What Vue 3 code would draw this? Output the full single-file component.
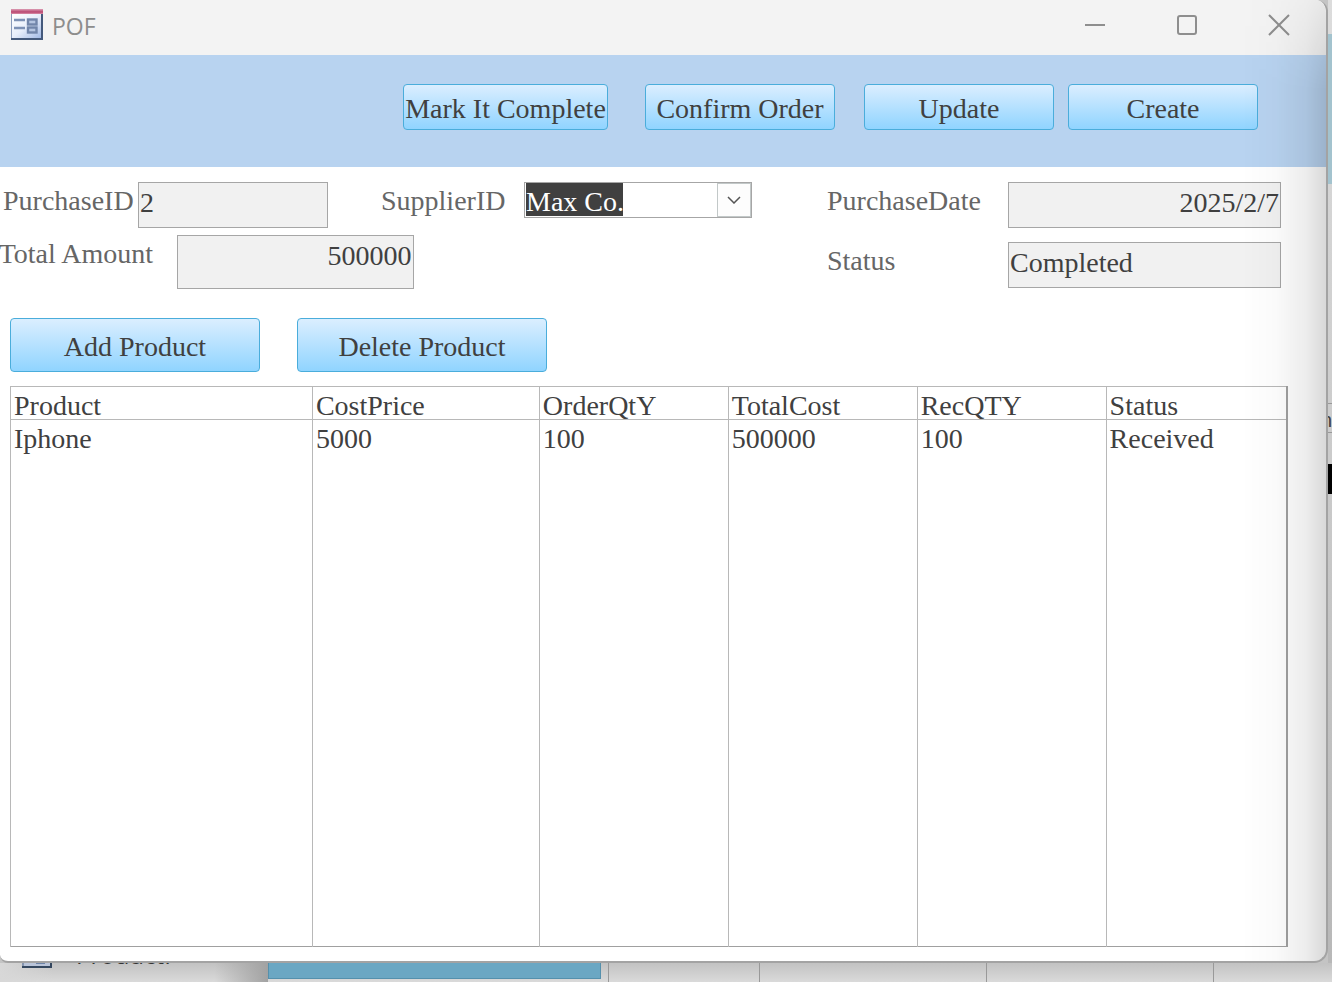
<script setup>
import { ref } from 'vue'

const supplier = ref('Max Co.')
const actions = [
  { label: 'Mark It Complete', kind: 'mark' },
  { label: 'Confirm Order', kind: 'confirm' },
  { label: 'Update', kind: 'update' },
  { label: 'Create', kind: 'create' },
]
const columns = ['Product', 'CostPrice', 'OrderQtY', 'TotalCost', 'RecQTY', 'Status']
const rows = [['Iphone', '5000', '100', '500000', '100', 'Received']]
</script>

<template>
  <div class="desktop">
    <div class="window">
      <header class="titlebar">
        <svg class="form-icon" width="32" height="32" viewBox="0 0 32 32" aria-hidden="true">
          <defs>
            <linearGradient id="iconBody" x1="0" y1="0" x2="1" y2="1">
              <stop offset="0" stop-color="#ffffff" />
              <stop offset="0.5" stop-color="#e8eefb" />
              <stop offset="1" stop-color="#9fb7e4" />
            </linearGradient>
            <linearGradient id="iconBar" x1="0" y1="0" x2="0" y2="1">
              <stop offset="0" stop-color="#dc9db4" />
              <stop offset="0.6" stop-color="#b8456f" />
              <stop offset="1" stop-color="#d990a9" />
            </linearGradient>
          </defs>
          <rect x="0" y="0" width="32" height="31" fill="#8a9bbb" />
          <rect x="1" y="5" width="30" height="24" fill="url(#iconBody)" />
          <path d="M0 30h32M31 5v26" stroke="#44597c" stroke-width="2" />
          <rect x="0" y="0" width="32" height="5" fill="url(#iconBar)" />
          <path d="M3 11h11M3 19h11" stroke="#7d91b5" stroke-width="2.4" />
          <rect x="17" y="10.5" width="8.500" height="5" fill="#b4c4e0" stroke="#7185aa" stroke-width="2.4" />
          <rect x="17" y="18.500" width="8.500" height="5" fill="#b4c4e0" stroke="#7185aa" stroke-width="2.4" />
        </svg>
        <h1>POF</h1>
        <div class="controls">
          <button type="button" aria-label="Minimize">
            <svg width="22" height="22" viewBox="0 0 22 22"><path d="M1 11h20" /></svg>
          </button>
          <button type="button" aria-label="Maximize">
            <svg width="22" height="22" viewBox="0 0 22 22"><rect x="2" y="2" width="18" height="18" rx="2" /></svg>
          </button>
          <button type="button" aria-label="Close">
            <svg width="22" height="22" viewBox="0 0 22 22"><path d="M1 1l20 20M21 1L1 21" /></svg>
          </button>
        </div>
      </header>

      <nav class="band">
        <button v-for="a in actions" :key="a.kind" type="button" class="cmd" :class="a.kind">{{ a.label }}</button>
      </nav>

      <main>
        <section class="fields">
          <div class="left">
            <div class="line">
              <div class="field purchase">
                <label for="purchase-id">PurchaseID</label>
                <input id="purchase-id" type="text" value="2" readonly />
              </div>
              <div class="field supplier">
                <label for="supplier-id">SupplierID</label>
                <div class="combo">
                  <select id="supplier-id" v-model="supplier">
                    <option>Max Co.</option>
                  </select>
                  <span class="arrow">
                    <svg width="14" height="8" viewBox="0 0 14 8"><path d="M1 1l6 6 6-6" /></svg>
                  </span>
                </div>
              </div>
            </div>
            <div class="field total">
              <label for="total">Total Amount</label>
              <input id="total" class="num" type="text" value="500000" readonly />
            </div>
          </div>
          <div class="right">
            <div class="field">
              <label for="date">PurchaseDate</label>
              <input id="date" class="num" type="text" value="2025/2/7" readonly />
            </div>
            <div class="field">
              <label for="status">Status</label>
              <input id="status" type="text" value="Completed" readonly />
            </div>
          </div>
        </section>

        <div class="row-actions">
          <button type="button" class="cmd">Add Product</button>
          <button type="button" class="cmd">Delete Product</button>
        </div>

        <table>
          <colgroup>
            <col v-for="(c, i) in columns" :key="c" :class="'col' + i" />
          </colgroup>
          <thead>
            <tr><th v-for="c in columns" :key="c" scope="col">{{ c }}</th></tr>
          </thead>
          <tbody>
            <tr v-for="(r, i) in rows" :key="i"><td v-for="(v, j) in r" :key="j">{{ v }}</td></tr>
            <tr class="filler"><td v-for="c in columns" :key="c"></td></tr>
          </tbody>
        </table>
      </main>
      <div class="shade"></div>
    </div>

    <aside class="behind-right">
      <div class="teal"></div>
      <div class="sheet"><span>n</span></div>
      <div class="black"></div>
    </aside>

    <footer class="behind-bottom">
      <div class="tree">
        <svg width="30" height="16" viewBox="0 0 30 16" aria-hidden="true">
          <rect x="0" y="0" width="30" height="14" fill="#8494ae" />
          <rect x="2" y="0" width="26" height="12" fill="#b9c4d9" />
          <path d="M14 9h9" stroke="#6c83a8" stroke-width="2" />
          <path d="M0 13h30M29 0v14" stroke="#34475f" stroke-width="2" />
        </svg>
        <span>ProductF</span>
      </div>
      <div class="selected"></div>
      <div class="cell first"></div>
      <div class="cell"></div>
      <div class="cell"></div>
      <div class="cell last"></div>
    </footer>
  </div>
</template>

<style>
body {
  background: #cfcfcf;
}
</style>

<style scoped>
* {
  box-sizing: border-box;
}
.desktop {
  min-height: 100vh;
  display: grid;
  grid-template-columns: minmax(0, 1fr) 4px;
  grid-template-rows: 1fr 19px;
  background: #c4c4c4;
  overflow: hidden;
  color: #404040;
  font-family: "Liberation Serif", "Noto Sans CJK TC", serif;
  font-size: 28px;
}
.window {
  position: relative;
  display: flex;
  flex-direction: column;
  background: #fff;
  border: solid #a3a3a3;
  border-width: 0 2px 2px 0;
  border-radius: 0 12px 14px 8px;
  overflow: hidden;
}
.shade {
  position: absolute;
  inset: 0 0 0 auto;
  width: 84px;
  pointer-events: none;
  background: linear-gradient(to right, transparent, rgba(0, 0, 0, 0.02) 40%, rgba(0, 0, 0, 0.07) 75%, rgba(0, 0, 0, 0.15));
  mask-image: linear-gradient(rgba(0, 0, 0, 0.3), #000 90px);
}
.titlebar {
  height: 55px;
  display: flex;
  align-items: center;
  padding-left: 11px;
  background: #f3f3f3;
}
.form-icon {
  margin-bottom: 6px;
}
h1 {
  margin: 0 0 4px 9px;
  font: 400 23px/32px "Open Sans", "Noto Sans", sans-serif;
  color: #8d8d8d;
}
.controls {
  margin: 0 1px 6px auto;
  display: flex;
}
.controls button {
  width: 92px;
  height: 50px;
  padding: 0;
  border: 0;
  background: none;
  display: grid;
  place-items: center;
}
.controls svg {
  fill: none;
  stroke: #8e8e8e;
  stroke-width: 2;
}
.band {
  height: 112px;
  padding: 29px 68px 0 0;
  display: flex;
  justify-content: flex-end;
  background: #b8d3f0;
}
.cmd {
  padding: 4px 0 0;
  border: 1px solid #4aaddb;
  border-radius: 4px;
  background: linear-gradient(#dbeeff, #90d4ff);
  color: #404040;
  font: inherit;
  line-height: 32px;
  white-space: nowrap;
}
.band .cmd {
  width: 190px;
  height: 46px;
}
.band .mark {
  width: 205px;
  margin-right: 37px;
}
.band .confirm {
  margin-right: 29px;
}
.band .update {
  margin-right: 14px;
}
main {
  flex: 1;
  display: flex;
  flex-direction: column;
  padding: 15px 0 14px;
}
.fields {
  display: grid;
  grid-template-columns: minmax(0, 752fr) minmax(0, 454fr);
  gap: 75px;
  padding-right: 45px;
}
.line {
  display: flex;
  gap: 53px;
}
.field {
  display: flex;
  align-items: flex-start;
  min-width: 0;
}
.field label {
  flex: none;
  color: #666;
  line-height: 32px;
  padding-top: 3px;
  white-space: nowrap;
}
.field input {
  flex: 1;
  min-width: 0;
  height: 46px;
  padding: 4px 1px 8px;
  border: 1px solid #a6a6a6;
  border-radius: 0;
  background: #f1f1f1;
  color: inherit;
  font: inherit;
  line-height: 32px;
}
.field input.num {
  text-align: right;
}
.purchase {
  flex: 328 1 0;
}
.purchase label {
  width: 138px;
  padding-left: 3px;
}
.supplier {
  flex: 371 1 0;
}
.supplier label {
  width: 143px;
}
.combo {
  position: relative;
  flex: 1;
  min-width: 0;
  height: 36px;
}
select {
  appearance: none;
  display: block;
  width: 100%;
  height: 36px;
  padding: 3px 36px 0 1px;
  border: 1px solid #a6a6a6;
  border-radius: 0;
  background: linear-gradient(#404040, #404040) 1px 0 / 97px 33px no-repeat #fff;
  color: #fff;
  font: inherit;
  line-height: 32px;
}
option {
  color: #404040;
}
.arrow {
  position: absolute;
  inset: 1px 1px 1px auto;
  width: 34px;
  border: 1px solid #c2c8c8;
  background: #fdfdfd;
  display: grid;
  place-items: center;
  pointer-events: none;
}
.arrow svg {
  fill: none;
  stroke: #555;
  stroke-width: 1.5;
}
.total {
  width: 55%;
  margin-top: 7px;
}
.total label {
  width: 153px;
  margin-right: 24px;
  display: flex;
  justify-content: flex-end;
}
.field.total input {
  height: 54px;
  padding-bottom: 16px;
}
.right {
  display: flex;
  flex-direction: column;
  gap: 14px;
}
.right label {
  width: 181px;
}
.row-actions {
  display: flex;
  gap: 37px;
  padding: 29px 10px 14px;
}
.row-actions .cmd {
  width: 250px;
  height: 54px;
}
table {
  flex: 1;
  margin: 0 38px 0 10px;
  border-collapse: collapse;
  table-layout: fixed;
  border: 1px solid #a0a0a0;
  border-right-width: 2px;
}
.col0 { width: 23.65%; }
.col1 { width: 17.78%; }
.col2, .col3, .col4 { width: 14.8%; }
th,
td {
  height: 33px;
  padding: 6px 3px 0;
  border: 1px solid #b8b8b8;
  font-weight: 400;
  line-height: 26px;
  text-align: left;
  vertical-align: top;
}
th:last-child,
td:last-child {
  border-right: 0;
}
td {
  border-top: 0;
  border-bottom: 0;
}
.filler td {
  height: auto;
}
.behind-right {
  padding-top: 34px;
  background: linear-gradient(#dcdcdc, #b8b8b8);
}
.teal {
  height: 150px;
  background: #a3c3ce;
}
.sheet {
  height: 30px;
  margin-top: 219px;
  border: solid #999;
  border-width: 1px 0;
  overflow: hidden;
  font: 20px/32px "Liberation Sans", sans-serif;
  direction: rtl;
}
.black {
  height: 30px;
  margin-top: 31px;
  background: #000;
}
.behind-bottom {
  grid-column: 1 / -1;
  display: flex;
  background: linear-gradient(#c2c2c2, #dadada);
}
.tree {
  width: 268px;
  display: flex;
  align-items: flex-start;
  gap: 24px;
  padding-left: 22px;
  background: linear-gradient(to right, #d8d8d8, transparent 20%, transparent 80%, #a2a2a2);
  overflow: hidden;
}
.tree svg {
  margin-top: -9px;
}
.tree span {
  margin-top: -22px;
  font: 24px/28px "Open Sans", sans-serif;
  color: #333;
}
.selected {
  width: 333px;
  height: 16px;
  background: #6ba7c3;
  border: solid #5590ac;
  border-width: 0 1px 1px;
}
.cell {
  width: 227px;
  border-left: 1px solid #999;
}
.cell.first {
  width: 151px;
  margin-left: 7px;
}
.cell.last {
  flex: 1;
}
</style>
